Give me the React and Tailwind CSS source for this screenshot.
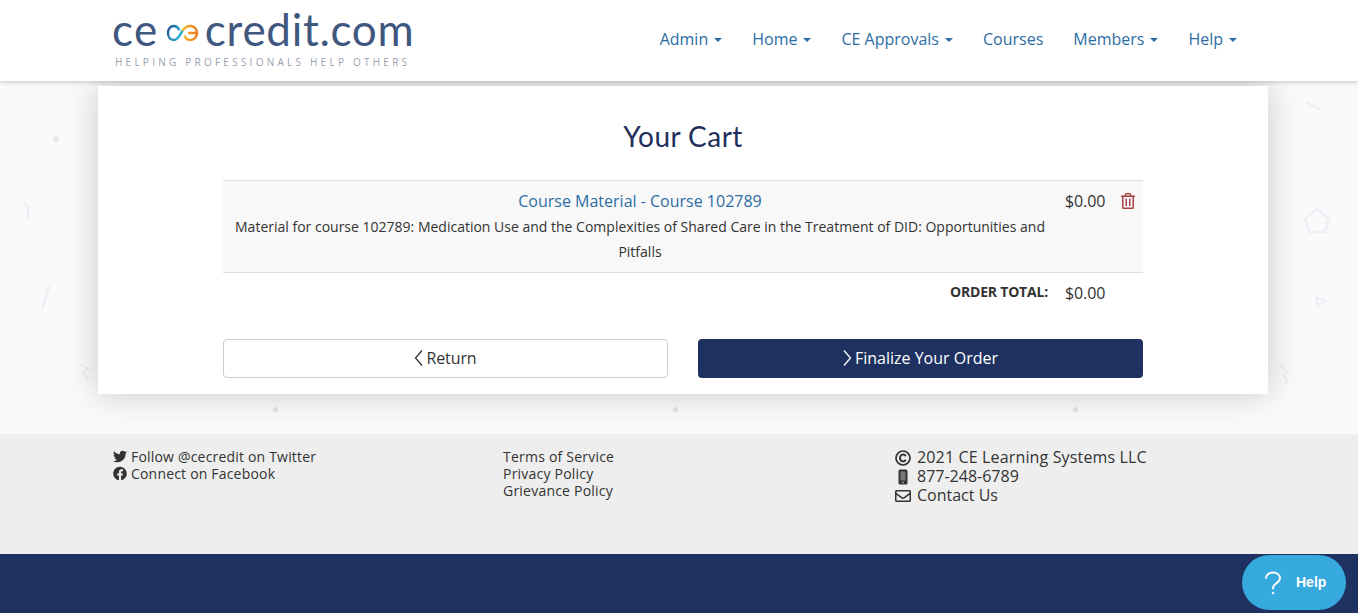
import React from 'react';
import { FaTwitter, FaFacebook, FaRegEnvelope, FaRegTrashAlt } from 'react-icons/fa';

const navItems = [
  { label: 'Admin', caret: true },
  { label: 'Home', caret: true },
  { label: 'CE Approvals', caret: true },
  { label: 'Courses' },
  { label: 'Members', caret: true },
  { label: 'Help', caret: true },
];

function LogoMark() {
  return (
    <svg width="33" height="18" viewBox="0 0 33 18" fill="none" className="ml-[7px] mr-[6px] mt-[8px] shrink-0">
      <defs>
        <linearGradient id="logo-a" x1="0" y1="0" x2="1" y2="0.4">
          <stop offset="0" stopColor="#2c5596" />
          <stop offset="1" stopColor="#22b5cc" />
        </linearGradient>
        <linearGradient id="logo-b" x1="0" y1="0" x2="1" y2="0">
          <stop offset="0" stopColor="#f6bb2c" />
          <stop offset="1" stopColor="#ee7622" />
        </linearGradient>
      </defs>
      <path d="M13 5.5C12 3.2 10.2 2 7.8 2C4.4 2 2 5 2 9C2 13 4.4 16 7.8 16C12.5 16 14.5 9.5 17 6" stroke="url(#logo-a)" strokeWidth="2.4" strokeLinecap="round" />
      <path d="M17 6C19 3.2 21 2 24.5 2C28 2 31 5 31 9C31 13 28 16 24.5 16C22 16 20 15 18.8 12.5M23 9H30" stroke="url(#logo-b)" strokeWidth="2.4" strokeLinecap="round" />
    </svg>
  );
}

function Logo() {
  return (
    <div className="w-[300px] mt-[7px]">
      <div className="flex items-center h-[44px] text-[#40577f] font-['Lato',sans-serif] text-[44px] leading-[44px] whitespace-nowrap">
        <span className="tracking-[1.5px]">ce</span>
        <LogoMark />
        <span className="tracking-[0.7px]">credit.com</span>
      </div>
      <div className="mt-[4px] pl-[3px] text-[10px] leading-[14px] tracking-[3.24px] text-[#9aa1b0] font-['Open_Sans',sans-serif] whitespace-nowrap">
        HELPING PROFESSIONALS HELP OTHERS
      </div>
    </div>
  );
}

function Header() {
  return (
    <header className="relative z-10 h-[81px] bg-white shadow-[0_1px_5px_rgba(0,0,0,0.22)]">
      <div className="flex justify-between pl-[112px] pr-[121px]">
        <Logo />
        <nav className="flex items-center h-[78px] gap-[30px] text-[16px] text-[#2e6da4]">
          {navItems.map((item) => (
            <a key={item.label} className="flex items-center whitespace-nowrap">
              {item.label}
              {item.caret && (
                <span className="ml-[6px] mt-[2px] w-0 h-0 border-x-[4px] border-x-transparent border-t-[4px] border-t-[#2e6da4]" />
              )}
            </a>
          ))}
        </nav>
      </div>
    </header>
  );
}

// faint confetti shapes behind the card
function BackgroundShapes() {
  const dots = [[275, 409], [675, 409], [1075, 409]];
  return (
    <svg className="absolute left-0 top-0" width="1358" height="353" viewBox="0 81 1358 353" fill="none" stroke="#eeeff2" strokeWidth="2.5">
      <circle cx="56" cy="139" r="3" fill="#e8e9ec" stroke="none" />
      <path d="M24 202C29 206 29 214 27 219" />
      <path d="M49 286L42 309" />
      <path d="M81 365L88 369L83 373L88 378L85 381" strokeWidth="2" />
      <path d="M1306 102L1321 110" />
      <path d="M1317 209L1329 219L1325 232H1309L1305 219Z" />
      <path d="M1316 298L1325 301L1318 306Z" />
      <path d="M1281 365L1288 372L1283 375L1287 381L1285 384" strokeWidth="2" />
      {dots.map(([x, y]) => (
        <rect key={x} x={x - 2} y={y - 2} width="5" height="5" rx="2" fill="#e4e5e8" stroke="none" />
      ))}
    </svg>
  );
}

function Chevron({ left }) {
  return (
    <svg width="9" height="18" viewBox="0 0 9 18" fill="none" stroke="currentColor" strokeWidth="1.3" className="mr-[3px]">
      <path d={left ? 'M8 1.5L1.5 9L8 16.5' : 'M1 1.5L7.5 9L1 16.5'} />
    </svg>
  );
}

function Cart() {
  return (
    <div className="relative w-[1170px] h-[308px] ml-[98px] bg-white shadow-[0_0_32px_rgba(0,0,0,0.2)] pt-[32px]">
      <h1 className="text-center text-[28px] leading-[36px] text-[#1e2f5c] font-['Lato',sans-serif] tracking-[0.45px]">Your Cart</h1>
      <div className="mx-[125px] mt-[26px]">
        <div className="flex h-[93px] bg-[#f8f8f8] border-y border-[#dddddd]">
          <div className="w-[833px] pl-[1px] text-center">
            <a className="block mt-[9px] text-[16px] leading-[22px] text-[#2e6da4]">Course Material - Course 102789</a>
            <p className="mt-[2px] text-[14px] leading-[25px] text-[#333333]">
              Material for course 102789: Medication Use and the Complexities of Shared Care in the Treatment of DID: Opportunities and Pitfalls
            </p>
          </div>
          <div className="ml-[9px] mt-[9px] w-[55px] text-[16px] leading-[22px] tracking-[-0.1px] text-[#333333]">$0.00</div>
          <FaRegTrashAlt className="mt-[12px] text-[#a94442] text-[16px]" />
        </div>
        <div className="flex items-start h-[40px]">
          <div className="w-[825px] mt-[9px] text-right text-[14px] leading-[20px] font-bold tracking-[-0.2px] text-[#333333]">ORDER TOTAL:</div>
          <div className="ml-[17px] mt-[9px] text-[16px] leading-[22px] tracking-[-0.1px] text-[#333333]">$0.00</div>
        </div>
      </div>
      <div className="flex justify-between mx-[125px] mt-[26px]">
        <button className="flex items-center justify-center w-[445px] h-[39px] pb-[2px] bg-white border border-[#cccccc] rounded-[4px] text-[16px] tracking-[-0.1px] text-[#333333]">
          <Chevron left />
          Return
        </button>
        <button className="flex items-center justify-center w-[445px] h-[39px] pb-[2px] bg-[#1e3160] rounded-[4px] text-[16px] font-medium text-white">
          <Chevron />
          Finalize Your Order
        </button>
      </div>
    </div>
  );
}

function Footer() {
  return (
    <footer className="flex h-[120px] bg-[#eeeeee] pt-[14px] text-[#333333] text-[14px] leading-[17px]">
      <div className="w-[390px] ml-[113px] tracking-[0.19px]">
        <div className="flex items-center"><FaTwitter className="w-[14px] mr-[4px] text-[15px]" />Follow @cecredit on Twitter</div>
        <div className="flex items-center"><FaFacebook className="w-[14px] mr-[4px] text-[15px]" />Connect on Facebook</div>
      </div>
      <div className="w-[392px] tracking-[0.22px]">
        <div>Terms of Service</div>
        <div>Privacy Policy</div>
        <div>Grievance Policy</div>
      </div>
      <div className="text-[16px] leading-[19px]">
        <div className="flex items-center font-medium tracking-[0.15px]">
          <svg width="16" height="16" viewBox="0 0 16 16" fill="none" stroke="#333333" className="mr-[6px]">
            <circle cx="8" cy="8" r="7" strokeWidth="1.7" />
            <path d="M10.8 6.2C10 4.8 8.6 4.4 7.4 4.7C5.8 5.1 5 6.4 5 8C5 9.6 5.8 10.9 7.4 11.3C8.6 11.6 10 11.2 10.8 9.8" strokeWidth="1.9" />
          </svg>
          2021 CE Learning Systems LLC
        </div>
        <div className="flex items-center">
          <svg width="10" height="16" viewBox="0 0 10 16" className="ml-[3px] mr-[9px]">
            <rect x="0.5" y="0.5" width="9" height="15" rx="1.5" fill="#333333" />
            <rect x="2.5" y="2.5" width="5" height="9" fill="#777777" />
            <circle cx="5" cy="13.4" r="0.9" fill="#aaaaaa" />
          </svg>
          877-248-6789
        </div>
        <div className="flex items-center"><FaRegEnvelope className="w-[16px] mr-[6px] text-[16px]" />Contact Us</div>
      </div>
    </footer>
  );
}

export default function App() {
  return (
    <div className="relative h-[613px] overflow-hidden bg-[#f9fafc] font-['Open_Sans',sans-serif]">
      <Header />
      <main className="relative h-[353px] pt-[5px]">
        <BackgroundShapes />
        <Cart />
      </main>
      <Footer />
      <div className="h-[59px] bg-[#1e3160]" />
      <button className="absolute right-[12px] bottom-[3px] flex items-center w-[104px] h-[55px] rounded-full bg-[#36a9dd] text-white font-['Liberation_Sans',sans-serif]">
        <svg width="18" height="24" viewBox="0 0 18 24" fill="none" stroke="white" strokeWidth="1.8" strokeLinecap="round" className="ml-[22px]">
          <path d="M2 7C2.5 3.5 5.5 1.5 9 1.5C13 1.5 16 4 16 7.2C16 10 14 11.2 12 12.5C10 13.8 9 15 9 17.5" />
          <circle cx="9" cy="22" r="1.2" fill="white" stroke="none" />
        </svg>
        <span className="ml-[14px] text-[14px] font-bold">Help</span>
      </button>
    </div>
  );
}
